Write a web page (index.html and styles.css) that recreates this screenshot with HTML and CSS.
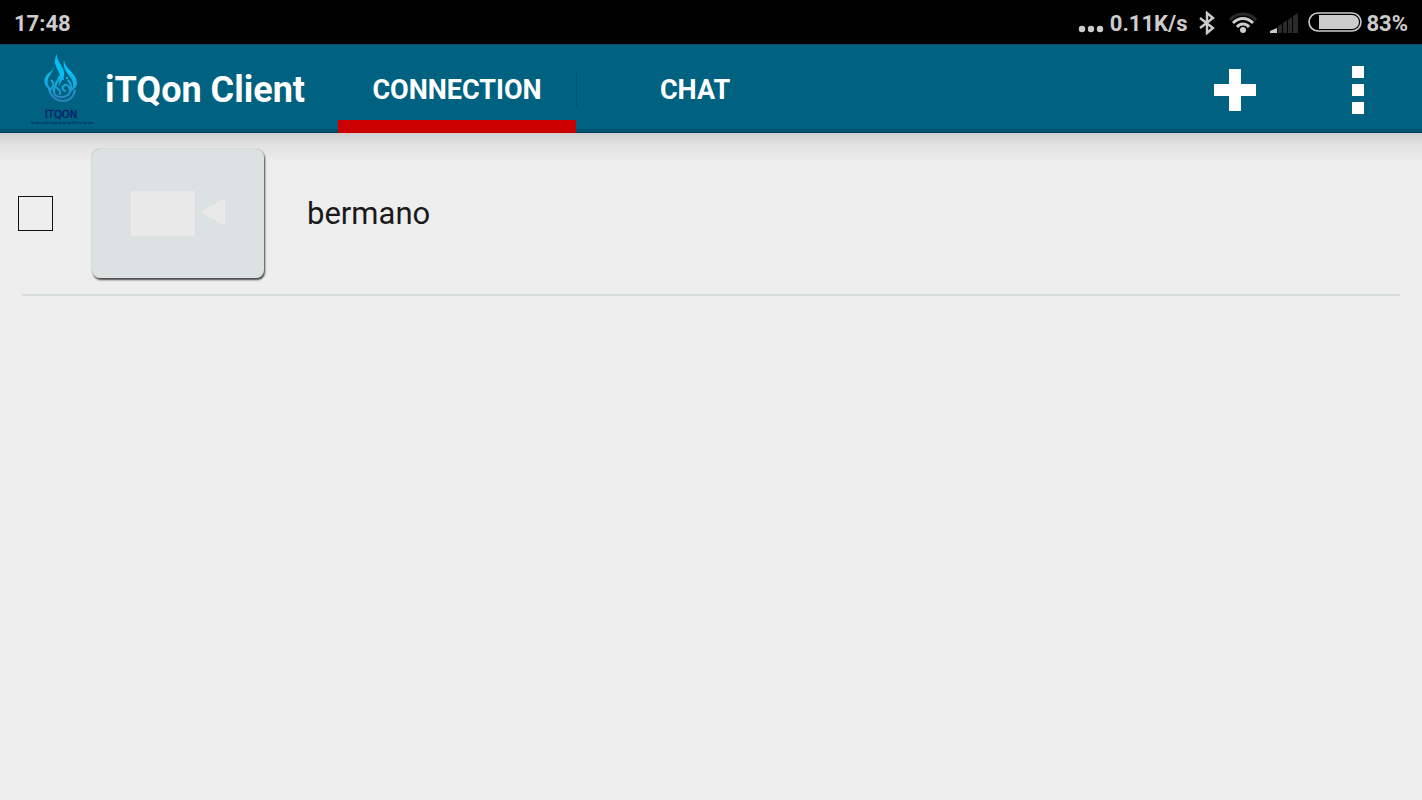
FILE: index.html
```html
<!DOCTYPE html>
<html lang="en">
<head>
    <meta charset="UTF-8">
    <title>iTQon Client</title>
    <link rel="stylesheet" href="styles.css">
</head>
<body>
    <div class="status">
        <span>17:48</span>
        <div class="status-right">
            <svg class="dots" width="26" height="8" viewBox="0 0 26 8" fill="#ccc">
                <circle cx="4" cy="4" r="3.2"/>
                <circle cx="13" cy="4" r="3.2"/>
                <circle cx="22" cy="4" r="3.2"/>
            </svg>
            <span class="speed">0.11K/s</span>
            <svg class="bluetooth" width="16" height="24" viewBox="0 0 16 24" fill="none" stroke="#ccc" stroke-width="2.4">
                <path d="M1 7L14 17L8 22V2L14 7L1 17"/>
            </svg>
            <svg class="wifi" width="28" height="22" viewBox="0 0 28 22" fill="none" stroke="#ccc" stroke-width="3">
                <path stroke="#2a2a2a" d="M1 8C8 0 20 0 27 8"/>
                <path d="M4 11C10 5 18 5 24 11"/>
                <path d="M8 15C11 11 17 11 20 15"/>
                <circle cx="14" cy="18" r="3" fill="#ccc" stroke="none"/>
            </svg>
            <svg class="signal" width="28" height="20" viewBox="0 0 28 20" fill="#2a2a2a">
                <path fill="#ccc" d="M0 20V18L7 15V20Z"/>
                <path d="M8 20V13L12 11V20ZM13 20V10L17 7V20ZM18 20V7L22 4V20ZM23 20V3L28 0V20Z"/>
            </svg>
            <svg class="battery" width="54" height="20" viewBox="0 0 54 20">
                <rect x="1" y="1" width="52" height="18" rx="9" fill="none" stroke="#ccc" stroke-width="1.6"/>
                <path fill="#ccc" d="M11 3H44A7 7 0 0 1 44 17H11Z"/>
            </svg>
            <span>83%</span>
        </div>
    </div>
    <header class="bar">
        <svg class="logo" width="72" height="74" viewBox="0 0 72 74">
            <defs>
                <linearGradient id="flame" x1="0" y1="0" x2="0" y2="50" gradientUnits="userSpaceOnUse">
                    <stop offset="0.4" stop-color="#06c0f5"/>
                    <stop offset="1" stop-color="#347ab8"/>
                </linearGradient>
            </defs>
            <g fill="url(#flame)">
                <path d="M31 1C30 9 40 15 38 23C37 27 34 29 33 34C32 30 34 27 34 23C34 17 25 12 31 1Z"/>
                <path d="M28 13C28 19 20 24 22 31C23 35 26 36 28 38C21 37 17 31 19 25C21 20 27 19 28 13Z"/>
                <path d="M38 6C38 16 51 20 51 30C51 34 48 37 45 38C47 34 48 31 46 27C43 21 36 17 38 6Z"/>
            </g>
            <g fill="none" stroke="url(#flame)" stroke-width="2">
                <path d="M25 27C30 32 26 36 23 36C25 44 31 48 37 48C44 48 48 43 49 37"/>
                <path d="M34 23C30 31 26 37 29 42C34 46 43 44 44 38C44 34 41 31 39 32C35 34 36 38 40 38M42 27C46 31 46 37 43 41M30 34C33 37 35 38 34 42"/>
                <path d="M36 26H38M40 25H42M29 30H31"/>
            </g>
            <text class="logo-name" x="35" y="65" text-anchor="middle">ITQON</text>
            <text class="logo-line" x="36" y="71" text-anchor="middle">We are a technology for giving VPN for the user</text>
        </svg>
        <h1>iTQon Client</h1>
        <nav class="tabs">
            <a class="tab active" href="#connection">CONNECTION</a>
            <a class="tab" href="#chat">CHAT</a>
        </nav>
        <button class="action add" type="button" aria-label="Add">
            <svg width="44" height="44" viewBox="0 0 44 44" fill="#fff"><path d="M1 16H16V1H28V16H43V28H28V43H16V28H1Z"/></svg>
        </button>
        <button class="action more" type="button" aria-label="More options">
            <svg width="12" height="48" viewBox="0 0 12 48" fill="#fff"><path d="M0 0H12V12H0ZM0 18H12V30H0ZM0 36H12V48H0Z"/></svg>
        </button>
    </header>
    <main id="connection">
        <ul class="list">
            <li class="item">
                <input class="check" type="checkbox" id="bermano">
                <span class="thumb">
                    <svg width="94" height="45" viewBox="0 0 94 45" fill="#e9e9e9"><path d="M0 0H64V45H0ZM70 21L94 7V35Z"/></svg>
                </span>
                <label for="bermano">bermano</label>
            </li>
        </ul>
    </main>
</body>
</html>
```
FILE: styles.css
```css
* {
    box-sizing: border-box;
}
body {
    margin: 0;
    min-height: 100vh;
    background: #eee;
    color: #1a1a1a;
    font-family: Roboto, sans-serif;
}
.status {
    display: flex;
    align-items: center;
    justify-content: space-between;
    height: 44px;
    padding: 2px 14px 0;
    background: #000;
    color: #ccc;
    font-size: 22px;
    font-weight: 700;
}
.status-right {
    display: flex;
    align-items: center;
}
.dots {
    margin: 12px 6px 0 0;
}
.bluetooth {
    margin-left: 12px;
}
.wifi {
    margin-left: 14px;
}
.signal {
    margin-left: 13px;
}
.battery {
    margin: 0 4px 2px 10px;
}
.bar {
    display: flex;
    align-items: center;
    height: 89px;
    padding: 2px 58px 0 0;
    background: #006280;
    border-top: 1px solid #00506a;
    box-shadow: inset 0 -1px #003a5c, inset 0 -4px #00536e;
    color: #fff;
}
.logo {
    margin: 0 7px 0 26px;
}
.logo-name {
    font-family: "DejaVu Sans", sans-serif;
    font-size: 10px;
    fill: #001c6b;
    stroke: #001c6b;
    stroke-width: 0.3;
}
.logo-line {
    font-size: 3px;
    fill: #001c6b;
}
h1 {
    margin: 0;
    font-size: 36px;
    font-weight: 700;
}
.tabs {
    display: flex;
    align-self: stretch;
    flex: 1;
    margin-left: 33px;
}
.tab {
    display: flex;
    align-items: center;
    justify-content: center;
    width: 238px;
    padding-top: 13px;
    border-bottom: 13px solid transparent;
    color: #fff;
    font-size: 27px;
    font-weight: 700;
    text-decoration: none;
}
.tab.active {
    border-bottom-color: #c00;
}
.tab + .tab {
    background: linear-gradient(#005470, #005470) 0 25px / 1px 36px no-repeat;
}
.action {
    display: flex;
    padding: 0;
    border: 0;
    background: none;
}
.more {
    margin-left: 95px;
}
main {
    background: linear-gradient(#cfcfcf, #e2e2e2 12px, #eee 30px);
}
.list {
    margin: 0;
    padding: 0 22px;
    list-style: none;
}
.item {
    display: flex;
    align-items: center;
    height: 163px;
    border-bottom: 2px solid #d7dddb;
    font-size: 31px;
}
.check {
    appearance: none;
    width: 35px;
    height: 35px;
    margin: 0 39px 0 -4px;
    border: 1px solid #111;
}
.thumb {
    display: flex;
    align-items: center;
    justify-content: center;
    width: 172px;
    height: 129px;
    margin-right: 43px;
    border-radius: 8px;
    background: #dce2e1;
    box-shadow: 0 0 1px #888, 1px 2px 2px #444;
}
```
